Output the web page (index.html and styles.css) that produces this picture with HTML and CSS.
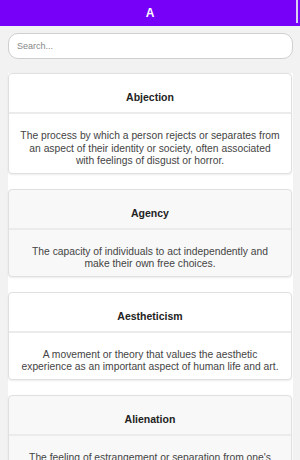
FILE: index.html
```html
<!DOCTYPE html>
<html lang="en">
<head>
    <meta charset="UTF-8">
    <meta name="viewport" content="width=device-width, initial-scale=1.0">
    <title>Glossary - A</title>
    <link rel="stylesheet" href="styles.css">
</head>
<body>
    <header class="topbar">
        <span class="letter">A</span>
    </header>

    <div class="page">
        <input type="text" class="search" placeholder="Search...">

        <!-- Term list -->
        <div class="term-list">
            <div class="term">
                <div class="term-title">Abjection</div>
                <div class="term-body">The process by which a person rejects or separates from an aspect of their identity or society, often associated with feelings of disgust or horror.</div>
            </div>
            <div class="term">
                <div class="term-title">Agency</div>
                <div class="term-body">The capacity of individuals to act independently and make their own free choices.</div>
            </div>
            <div class="term">
                <div class="term-title">Aestheticism</div>
                <div class="term-body">A movement or theory that values the aesthetic experience as an important aspect of human life and art.</div>
            </div>
            <div class="term">
                <div class="term-title">Alienation</div>
                <div class="term-body">The feeling of estrangement or separation from one's surroundings, society, or oneself.</div>
            </div>
        </div>
    </div>
</body>
</html>
```

FILE: styles.css
```css
body {
    margin: 0;
    font-family: "Liberation Sans", Arial, sans-serif;
    background-color: #f2f2f2;
    color: #333;
}
.topbar {
    position: relative;
    height: 26px;
    background-color: #7700f8;
    display: flex;
    align-items: center;
    justify-content: center;
}
.topbar::after {
    content: "";
    position: absolute;
    right: 2px;
    top: 0;
    width: 2px;
    height: 23px;
    background-color: #d8d0ee;
}
.letter {
    color: #fff;
    font-weight: bold;
    font-size: 12px;
}
.page {
    padding: 7px 8px 0 8px;
}
.search {
    display: block;
    box-sizing: border-box;
    width: 285px;
    height: 26px;
    padding: 0 8px;
    border: 1px solid #cfcfcf;
    border-radius: 10px;
    background-color: #fff;
    font-family: inherit;
    font-size: 9px;
    color: #333;
    outline: none;
}
.search::placeholder {
    color: #888;
}
.term-list {
    margin-top: 14px;
    width: 285px;
    background-color: #fff;
}
.term {
    width: 284px;
    box-sizing: border-box;
    border: 1px solid #e0e0e0;
    border-radius: 4px;
    box-shadow: 0 1px 2px rgba(0, 0, 0, 0.08);
    margin-bottom: 15px;
    background-color: #fff;
    text-align: center;
}
.term:nth-child(even) {
    background-color: #f8f8f8;
}
.term-title {
    padding: 17px 10px 8px;
    font-size: 10.5px;
    font-weight: bold;
    line-height: 13px;
    color: #222;
    border-bottom: 2px solid #ebebeb;
}
.term-body {
    padding: 16px 10px 5px;
    font-size: 10.3px;
    line-height: 12.5px;
    color: #444;
}
```
